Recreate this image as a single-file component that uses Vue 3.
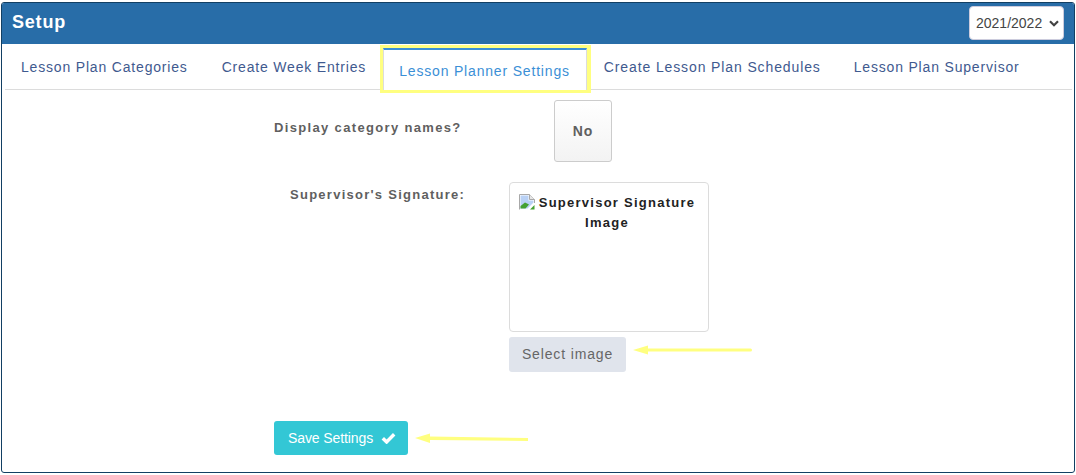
<script setup>
const tabs = [
  { label: 'Lesson Plan Categories', active: false },
  { label: 'Create Week Entries', active: false },
  { label: 'Lesson Planner Settings', active: true },
  { label: 'Create Lesson Plan Schedules', active: false },
  { label: 'Lesson Plan Supervisor', active: false }
]
</script>

<template>
  <div class="page">
    <section class="panel">
      <header class="head">
        <h1 class="title">Setup</h1>
        <div class="year">
          <span>2021/2022</span>
          <svg class="chev" width="10" height="7" viewBox="0 0 10 7"><path d="M1 1.2 5 5.2 9 1.2" fill="none" stroke="#444" stroke-width="2.2"/></svg>
        </div>
      </header>
      <nav class="tabs">
        <a v-for="t in tabs" :key="t.label" class="tab" :class="{ active: t.active }">{{ t.label }}</a>
      </nav>
      <div class="form">
        <div class="row-one">
          <div class="label label-one">Display category names?</div>
          <button class="no">No</button>
        </div>
        <div class="row-two">
          <div class="label label-two">Supervisor's Signature:</div>
          <div class="sig-col">
            <div class="sig-box">
              <svg class="broken" width="16" height="16" viewBox="0 0 16 16">
                <path d="M.5 15.5V.5H10.5L15.5 5.5V9" fill="#fff" stroke="#a8a8a8"/>
                <path d="M10.5 .5V5.5H15.5" fill="#e6e6e6" stroke="#a8a8a8"/>
                <path d="M1.5 1.5H9.5V6.5H14.5V8.5L8.5 14.5H1.5Z" fill="#b9d1f5"/>
                <path d="M1.5 14.5V12L6 8.5 10 10.5 6.5 14.5Z" fill="#45a132"/>
                <path d="M11 15.5 15.5 11V15.5Z" fill="#45a132"/>
              </svg><span>Supervisor Signature Image</span>
            </div>
            <div class="select-wrap">
              <button class="select">Select image</button>
              <svg class="arrow" width="119" height="10" viewBox="0 0 119 10"><path d="M0 5 15 .5V3.5H117.5A1.5 1.5 0 0 1 117.5 6.5H15V9.5Z" fill="#ffff80"/></svg>
            </div>
          </div>
        </div>
        <div class="save-wrap">
          <button class="save"><span class="save-text">Save Settings</span>
            <svg class="check" width="15" height="12" viewBox="0 0 15 12"><path d="M1.8 6.2 5.6 10 13.2 2.2" fill="none" stroke="#fff" stroke-width="3.4"/></svg>
          </button>
          <svg class="arrow" width="113" height="11" viewBox="0 0 113 11"><path d="M0 5 15 .5V3.6L113 5V8L15 7V10Z" fill="#ffff80"/></svg>
        </div>
      </div>
    </section>
  </div>
</template>

<style>
html, body { margin: 0; background: #fff; }
</style>

<style scoped>
.page {
  width: 1076px;
  height: 475px;
  padding: 2px 1px 2px 1px;
  box-sizing: border-box;
  font-family: "Liberation Sans", Arial, sans-serif;
}
.panel {
  height: 471px;
  box-sizing: border-box;
  border: 1px solid #123f63;
  border-radius: 3px;
  overflow: hidden;
  background: #fff;
}
.head {
  height: 41px;
  background: #286da8;
  display: flex;
  align-items: center;
  justify-content: space-between;
  padding: 0 10px;
}
.title {
  margin: 0 0 2px;
  font-size: 18px;
  font-weight: 700;
  letter-spacing: 0.8px;
  color: #fff;
}
.year {
  width: 95px;
  height: 34px;
  box-sizing: border-box;
  margin-bottom: 1px;
  background: #fff;
  border: 1px solid #ccd;
  border-radius: 4px;
  display: flex;
  align-items: center;
  justify-content: space-between;
  padding: 0 4px 0 6px;
  font-size: 14px;
  color: #444;
}
.tabs {
  display: flex;
  height: 46px;
  margin: 0 2px 0 3px;
  box-sizing: border-box;
  border-bottom: 1px solid #dcdcdc;
  font-size: 14px;
  letter-spacing: 0.82px;
}
.tab {
  padding: 15px 17px 0;
  color: #3f5a8f;
  white-space: nowrap;
}
.tab:first-child { padding: 15px 17px 0 16px; }
.tab:nth-child(4) { padding-right: 16px; letter-spacing: 0.88px; }
.tab.active {
  position: relative;
  height: 42px;
  box-sizing: border-box;
  margin-top: 4px;
  padding: 13px 16px 0 15px;
  color: #3b8fd6;
  background: #fff;
  border: 1px solid #dcdcdc;
  border-top: 2px solid #3b8fd6;
  border-bottom: 0;
}
.tab.active::after {
  content: "";
  position: absolute;
  top: -5px;
  left: -4px;
  right: -5px;
  bottom: -3px;
  border: 3px solid #ffff80;
  border-right-width: 4px;
  pointer-events: none;
}
.form {
  padding: 10px 0 0 272px;
}
.label {
  font-size: 13px;
  font-weight: 700;
  color: #5f5f5f;
  white-space: nowrap;
}
.row-one { display: flex; height: 62px; }
.label-one { width: 280px; padding-top: 20px; letter-spacing: 1.34px; }
.no {
  width: 58px;
  height: 62px;
  padding: 0;
  border: 1px solid #ccc;
  border-radius: 3px;
  background: linear-gradient(#fff, #f3f3f3);
  font: 700 14px "Liberation Sans", Arial, sans-serif;
  letter-spacing: 1px;
  color: #5f5f5f;
}
.row-two { display: flex; margin-top: 20px; }
.label-two { width: 235px; padding: 5px 0 0 16px; box-sizing: border-box; letter-spacing: 1.26px; }
.sig-col { display: flex; flex-direction: column; }
.sig-box {
  width: 200px;
  height: 150px;
  box-sizing: border-box;
  border: 1px solid #dcdcdc;
  border-radius: 4px;
  padding: 10px 12px 0 8px;
  text-align: center;
  font-size: 13px;
  font-weight: 700;
  line-height: 20px;
  color: #222;
  letter-spacing: 1.25px;
}
.broken { vertical-align: -3px; margin-right: 4px; }
.select-wrap { display: flex; align-items: center; margin-top: 5px; }
.select {
  width: 117px;
  height: 35px;
  padding: 0 0 1px;
  border: 0;
  border-radius: 3px;
  background: #e0e4ec;
  font: 14px "Liberation Sans", Arial, sans-serif;
  letter-spacing: 0.85px;
  color: #666;
}
.select-wrap .arrow { margin-left: 7px; margin-top: -10px; }
.save-wrap { display: flex; align-items: center; margin-top: 49px; }
.save {
  width: 134px;
  height: 34px;
  padding: 0 0 0 14px;
  border: 0;
  border-radius: 3px;
  background: #33c7d5;
  font: 14px "Liberation Sans", Arial, sans-serif;
  color: #fff;
  display: flex;
  align-items: center;
  gap: 8px;
}
.save-text { letter-spacing: -0.1px; }
.save-wrap .arrow { margin-left: 7px; }
</style>
